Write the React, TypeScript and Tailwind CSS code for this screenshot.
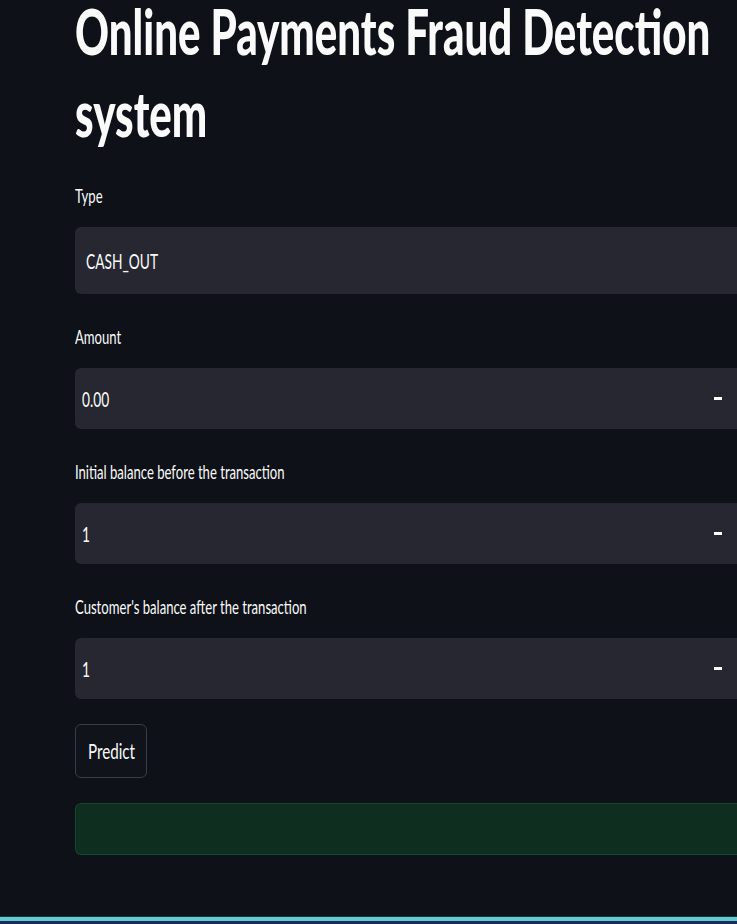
import React from 'react';

const font = { fontFamily: 'Lato, "Noto Sans", sans-serif' };

// the screenshot is stretched tall, so small type is scaled up vertically
const Tall: React.FC<{ children: React.ReactNode; className: string }> = ({ children, className }) => (
  <span className={`block origin-top-left whitespace-nowrap ${className}`}>{children}</span>
);

const Label: React.FC<{ text: string }> = ({ text }) => (
  <div className="h-[24px] pt-[1px] text-[#fafafa]">
    <Tall className="text-[13.1px] leading-[15.7px] scale-y-[1.527]">{text}</Tall>
  </div>
);

const NumberBox: React.FC<{ value: string }> = ({ value }) => (
  <div className="h-[61px] bg-[#262730] rounded-l-[6px] flex items-center justify-between pl-[7px] pr-[15px]">
    <div className="h-[24px] text-[#fafafa]">
      <Tall className="text-[13.75px] leading-[15.7px] scale-y-[1.527]">{value}</Tall>
    </div>
    <div className="w-[8px] h-[3px] bg-white" />
  </div>
);

export default function App() {
  return (
    <div className="min-h-[924px] w-full overflow-hidden bg-[#0e1117] flex flex-col" style={font}>
      <div className="pl-[75px] flex flex-col">
        <h1 className="font-black text-[#fafafa]">
          <div className="h-[82px]">
            <Tall className="text-[42px] leading-[42px] scale-y-[1.476]">Online Payments Fraud Detection</Tall>
          </div>
          <div className="h-[71px]">
            <Tall className="text-[42px] leading-[42px] scale-y-[1.476]">system</Tall>
          </div>
        </h1>

        <div className="mt-[31px]">
          <Label text="Type" />
          <div className="mt-[19px] h-[67px] bg-[#262730] rounded-l-[6px] flex items-center pl-[11px]">
            <div className="h-[24px] text-[#fafafa]">
              <Tall className="text-[13.75px] leading-[15.7px] scale-y-[1.527]">CASH_OUT</Tall>
            </div>
          </div>
        </div>

        <div className="mt-[31px]">
          <Label text="Amount" />
          <div className="mt-[19px]"><NumberBox value="0.00" /></div>
        </div>

        <div className="mt-[31px]">
          <Label text="Initial balance before the transaction" />
          <div className="mt-[19px]"><NumberBox value="1" /></div>
        </div>

        <div className="mt-[31px]">
          <Label text="Customer's balance after the transaction" />
          <div className="mt-[19px]"><NumberBox value="1" /></div>
        </div>

        <button className="mt-[25px] self-start h-[54px] w-[72px] rounded-[6px] border border-[#3a3c46] bg-[#10131a] flex items-center pl-[12px] text-[#fafafa]">
          <div className="h-[24px]">
            <Tall className="text-[15.2px] leading-[16.5px] scale-y-[1.447]">Predict</Tall>
          </div>
        </button>

        <div className="mt-[25px] h-[52px] rounded-l-[6px] border border-r-0 border-[#15452a] bg-[#0e2f1f]" />
      </div>

      <div className="flex-1" />
      <div className="h-[1px] bg-[#2b2f36]" />
      <div className="h-[4px] bg-[#5ecfd0]" />
      <div className="h-[3px] bg-[#1c2a5c]" />
    </div>
  );
}
